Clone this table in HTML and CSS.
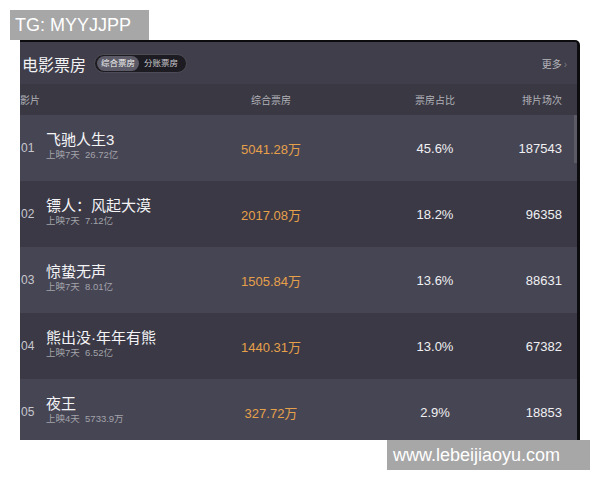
FILE: index.html
```html
<!DOCTYPE html>
<html lang="zh">
<head>
<meta charset="utf-8">
<link rel="stylesheet" href="styles.css">
</head>
<body>
<div class="tag">TG: MYYJJPP</div>
<div class="panel">
  <div class="scroll-thumb"></div>
  <div class="head">
    <div class="title">电影票房</div>
    <div class="toggle">
      <span class="opt active">综合票房</span>
      <span class="opt">分账票房</span>
    </div>
    <div class="more">更多<span class="chev">›</span></div>
  </div>
  <div class="grid colhead">
    <div class="c-film">影片</div>
    <div class="c-center">综合票房</div>
    <div></div>
    <div class="c-center">票房占比</div>
    <div class="c-right">排片场次</div>
  </div>
  <div class="grid row light">
    <div class="rank">01</div>
    <div class="film"><div class="name">飞驰人生3</div><div class="sub">上映7天&nbsp; 26.72亿</div></div>
    <div class="c-center gross">5041.28万</div>
    <div></div>
    <div class="c-center num">45.6%</div>
    <div class="c-right num">187543</div>
  </div>
  <div class="grid row dark">
    <div class="rank">02</div>
    <div class="film"><div class="name">镖人：风起大漠</div><div class="sub">上映7天&nbsp; 7.12亿</div></div>
    <div class="c-center gross">2017.08万</div>
    <div></div>
    <div class="c-center num">18.2%</div>
    <div class="c-right num">96358</div>
  </div>
  <div class="grid row light">
    <div class="rank">03</div>
    <div class="film"><div class="name">惊蛰无声</div><div class="sub">上映7天&nbsp; 8.01亿</div></div>
    <div class="c-center gross">1505.84万</div>
    <div></div>
    <div class="c-center num">13.6%</div>
    <div class="c-right num">88631</div>
  </div>
  <div class="grid row dark">
    <div class="rank">04</div>
    <div class="film"><div class="name">熊出没·年年有熊</div><div class="sub">上映7天&nbsp; 6.52亿</div></div>
    <div class="c-center gross">1440.31万</div>
    <div></div>
    <div class="c-center num">13.0%</div>
    <div class="c-right num">67382</div>
  </div>
  <div class="grid row light">
    <div class="rank">05</div>
    <div class="film"><div class="name">夜王</div><div class="sub">上映4天&nbsp; 5733.9万</div></div>
    <div class="c-center gross">327.72万</div>
    <div></div>
    <div class="c-center num">2.9%</div>
    <div class="c-right num">18853</div>
  </div>
</div>
<div class="site">www.lebeijiaoyu.com</div>
</body>
</html>
```

FILE: styles.css
```css
html, body {
  margin: 0;
  padding: 0;
  background: #ffffff;
}
body {
  font-family: "Liberation Sans", "Noto Sans CJK SC", sans-serif;
  width: 600px;
  height: 480px;
  overflow: hidden;
  padding-top: 10px;
  box-sizing: border-box;
}
.tag {
  margin-left: 10px;
  width: 139px;
  height: 30px;
  box-sizing: border-box;
  background: #a7a7a7;
  color: #ffffff;
  font-size: 18px;
  line-height: 30px;
  padding-left: 5px;
}
.panel {
  position: relative;
  margin-left: 20px;
  width: 560px;
  height: 400px;
  box-sizing: border-box;
  background: #3e3d4a;
  border-top: 2px solid #0c0c0e;
  border-right: 3px solid #0c0c0e;
  border-top-right-radius: 5px;
  overflow: hidden;
}
.scroll-thumb {
  position: absolute;
  right: 0;
  top: 73px;
  width: 3px;
  height: 48px;
  background: #5c5b66;
}
.head {
  height: 42px;
  display: flex;
  align-items: center;
  padding-right: 10px;
  background: #3f3e4a;
}
.title {
  color: #f2f2f4;
  font-size: 16px;
  margin-left: 2px;
  margin-top: 1px;
}
.toggle {
  margin-left: 8px;
  height: 19px;
  box-sizing: border-box;
  display: flex;
  align-items: center;
  padding: 0 8px 0 2px;
  background: #1d1c22;
  border: 1px solid #4d4c56;
  border-radius: 10px;
  gap: 5px;
}
.opt {
  font-size: 8.5px;
  color: #c9c9cf;
  line-height: 15px;
}
.opt.active {
  background: #5b5a66;
  color: #f2f2f2;
  border-radius: 8px;
  padding: 0 4px;
}
.more {
  margin-left: auto;
  font-size: 10px;
  color: #b6b6bc;
}
.chev {
  color: #7a7a82;
  margin-left: 2px;
}
.grid {
  display: grid;
  grid-template-columns: 26px 175px 100px 64px 100px 77px;
  align-items: center;
}
.colhead {
  height: 31px;
  background: #393843;
  font-size: 10px;
  color: #b2b2b8;
}
.c-film {
  grid-column: 1 / 3;
}
.colhead .c-film + .c-center {
  grid-column: 3;
}
.c-center {
  text-align: center;
}
.c-right {
  text-align: right;
}
.row {
  height: 66px;
}
.row.light {
  background: #464554;
}
.row.dark {
  background: #3a3945;
}
.rank {
  font-size: 12px;
  color: #c8c8ce;
  padding-left: 1px;
}
.film {
  margin-top: -4px;
}
.name {
  font-size: 15px;
  line-height: 17px;
  color: #f4f4f6;
}
.sub {
  font-size: 9.5px;
  line-height: 13px;
  color: #a3a3aa;
}
.gross {
  font-size: 13px;
  color: #e6a04a;
}
.num {
  font-size: 13px;
  color: #f0f0f2;
}
.site {
  margin-left: 387px;
  width: 203px;
  height: 30px;
  box-sizing: border-box;
  background: #a7a7a7;
  color: #ffffff;
  font-size: 18px;
  line-height: 30px;
  padding-left: 6px;
}
```
